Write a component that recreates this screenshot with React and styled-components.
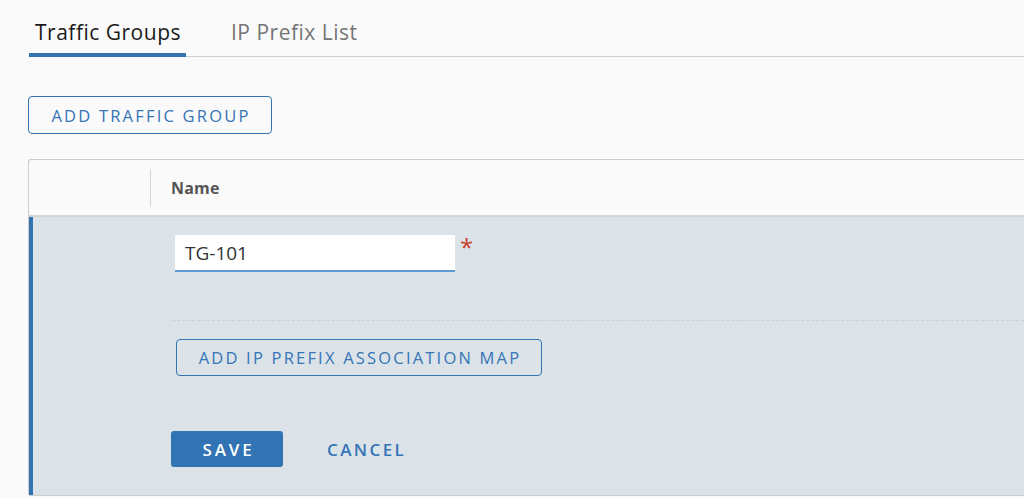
import React from "react";
import styled, { createGlobalStyle } from "styled-components";

const FONT = `"Open Sans", "Noto Sans", sans-serif`;

const Global = createGlobalStyle`
  html, body { margin: 0; padding: 0; background: #fafafa; }
  body { font-family: ${FONT}; color: #333; }
  * { box-sizing: border-box; }
`;

const Page = styled.div`
  width: 1024px;
  height: 499px;
  overflow: hidden;
  padding-left: 28px;
`;

const TabBar = styled.div`
  display: flex;
  height: 57px;
  align-items: flex-end;
  border-bottom: 1px solid #cfcfcf;
  margin-left: 1px;
`;

const Tab = styled.div`
  font-size: 21px;
  line-height: 28px;
  letter-spacing: 0.5px;
  padding: 0 5px 7px 6px;
  margin-right: 39px;
  color: ${(p) => (p.active ? "#1a1a1a" : "#757575")};
  border-bottom: 4px solid ${(p) => (p.active ? "#3273b3" : "transparent")};
  margin-bottom: -1px;
`;

const OutlineButton = styled.button`
  display: flex;
  align-items: center;
  justify-content: center;
  height: ${(p) => p.h || 38}px;
  width: ${(p) => p.w}px;
  margin: ${(p) => p.m || 0};
  border: 1px solid #3273b3;
  border-radius: 4px;
  background: transparent;
  color: #3575b6;
  font-family: ${FONT};
  font-size: 16.5px;
  font-weight: 500;
  letter-spacing: 2.2px;
  padding: 0 0 0 2px;
`;

const Table = styled.div`
  margin-top: 25px;
  border: 1px solid #cdcdcd;
  border-right: none;
  border-radius: 3px 0 0 3px;
  background: #fafafa;
`;

const HeaderRow = styled.div`
  display: flex;
  height: 57px;
  align-items: center;
  border-bottom: 2px solid #d4d4d4;
`;

const HeaderSpacer = styled.div`
  width: 122px;
  height: 38px;
  border-right: 1px solid #d4d4d4;
`;

const HeaderCell = styled.div`
  padding-left: 20px;
  font-size: 16px;
  font-weight: 700;
  letter-spacing: 0.2px;
  color: #555;
`;

const BodyRow = styled.div`
  height: 278px;
  background: #dbe3e9;
  border-left: 4px solid #3273b3;
  padding-left: 139px;
  padding-top: 18px;
  display: flex;
  flex-direction: column;
`;

const InputRow = styled.div`
  display: flex;
  align-items: flex-start;
  padding-left: 3px;
`;

const TextInput = styled.div`
  display: flex;
  align-items: center;
  width: 280px;
  height: 37px;
  background: #fff;
  border-bottom: 2px solid #5e9bd0;
  font-size: 19px;
  color: #333;
  padding: 1px 0 0 10px;
`;

const Required = styled.span`
  color: #c9432f;
  font-size: 24px;
  margin-left: 5px;
  line-height: 1;
`;

const Dashed = styled.div`
  margin-top: 48px;
  border-top: 1px dashed #c9cfd4;
`;

const Actions = styled.div`
  display: flex;
  align-items: center;
  margin: 55px 0 0 -1px;
`;

const PrimaryButton = styled.button`
  width: 112px;
  height: 36px;
  border: none;
  border-radius: 3px;
  background: #3273b3;
  color: #fff;
  font-family: ${FONT};
  font-size: 17px;
  font-weight: 600;
  letter-spacing: 2.8px;
  padding: 0 0 0 3px;
`;

const LinkButton = styled.button`
  background: none;
  border: none;
  margin-left: 44px;
  color: #3575b6;
  font-family: ${FONT};
  font-size: 17px;
  font-weight: 600;
  letter-spacing: 2.4px;
  padding: 0;
`;

export default function App() {
  return (
    <>
      <Global />
      <Page>
        <TabBar>
          <Tab active>Traffic Groups</Tab>
          <Tab>IP Prefix List</Tab>
        </TabBar>
        <OutlineButton w={244} m="39px 0 0 0">ADD TRAFFIC GROUP</OutlineButton>
        <Table>
          <HeaderRow>
            <HeaderSpacer />
            <HeaderCell>Name</HeaderCell>
          </HeaderRow>
          <BodyRow>
            <InputRow>
              <TextInput>TG-101</TextInput>
              <Required>*</Required>
            </InputRow>
            <Dashed />
            <OutlineButton w={366} h={37} m="18px 0 0 4px">ADD IP PREFIX ASSOCIATION MAP</OutlineButton>
            <Actions>
              <PrimaryButton>SAVE</PrimaryButton>
              <LinkButton>CANCEL</LinkButton>
            </Actions>
          </BodyRow>
        </Table>
      </Page>
    </>
  );
}
